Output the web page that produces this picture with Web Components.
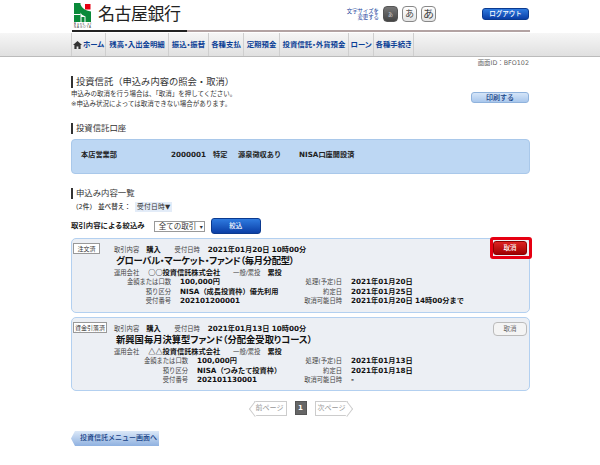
<!DOCTYPE html>
<html lang="ja">
<head>
<meta charset="utf-8">
<title>投資信託</title>
<style>
  html, body { margin: 0; background: #fff; }
  body { font: 7.2px/10px "DejaVu Sans", "Noto Sans CJK JP", sans-serif; color: #222; overflow: hidden; height: 465px; }
  main { display: block; width: 459px; margin: 0 0 0 71px; }
</style>
</head>
<body>
<bank-header></bank-header>
<bank-nav></bank-nav>
<main>
  <page-lead></page-lead>
  <section-title style="margin-top:14px">投資信託口座</section-title>
  <account-box></account-box>
  <order-filter></order-filter>
  <order-card badge="注文済" date="2021年01月20日 10時00分" name="グローバル・マーケット・ファンド（毎月分配型）"
    company="○○投資信託株式会社" amount="100,000円" deposit="NISA（成長投資枠）優先利用" number="202101200001"
    process="2021年01月20日" settle="2021年01月25日" limit="2021年01月20日 14時00分まで"
    label-width="100" height="75" tight active></order-card>
  <order-card badge="資金引落済" date="2021年01月13日 10時00分" name="新興国毎月決算型ファンド（分配金受取りコース）"
    company="△△投資信託株式会社" amount="100,000円" deposit="NISA（つみたて投資枠）" number="202101130001"
    process="2021年01月13日" settle="2021年01月18日" limit="-"
    label-width="117" height="74" style="margin-top:4px"></order-card>
  <page-nav></page-nav>
  <back-link>投資信託メニュー画面へ</back-link>
</main>
<script>
class BankHeader extends HTMLElement {
  constructor () {
    super()
    this.attachShadow({mode: 'open'}).innerHTML = `
      <style>
        :host { display: block; width: 458px; height: 33px; margin-left: 72px; box-sizing: border-box; }
        .top { display: flex; align-items: flex-start; height: 30px; }
        .logo { margin: 2px 6px 0 1px; }
        .name { font: 400 17px/18px "Noto Sans CJK JP", sans-serif; letter-spacing: -.5px; color: #222; margin-top: 4px; }
        .size { display: flex; align-items: center; gap: 4px; margin: 6px 0 0 auto; }
        .size span { font-size: 5.4px; line-height: 6.5px; color: #1a3f9c; text-align: right; }
        .size b { display: flex; align-items: center; justify-content: center; width: 15px; height: 16px; border: 1px solid #888; border-radius: 4px; box-sizing: border-box; background: linear-gradient(#fff, #e4e4e4); color: #444; font-weight: 400; font-size: 9px; line-height: 1; }
        .size b.on { background: linear-gradient(#777, #444); color: #ddd; font-size: 5px; border-color: #555; }
        .size b.lg { font-size: 11px; }
        .out { width: 47px; height: 12px; margin: 8px 1px 0 46px; border-radius: 3px; background: linear-gradient(#2f7be0, #0a3ea6); border: 1px solid #0b3a8f; box-sizing: border-box; color: #fff; font-size: 6.5px; line-height: 10px; text-align: center; font-weight: 500; }
        .rule { height: 2px; width: 458px; background: linear-gradient(90deg, #222 0, #222 115px, #b3a3a3 115px, #b3a3a3 100%); }
      </style>
      <div class="top">
        <svg class="logo" width="19" height="26" viewBox="0 0 19 26">
          <path fill="#0a8a3a" d="M1 1h6.5v1.5C9 6 12 8.5 18 9.5V20h-5.5v-5.6C9.5 13.5 8 12 7.5 10.5V20H1z"/>
          <rect x="1" y="12" width="6.5" height="1" fill="#fff"/>
          <rect x="8.5" y="15" width="3" height="5" fill="#0a8a3a"/>
          <rect x="12" y="2" width="5.5" height="5.5" fill="#e60012"/>
          <text x="1" y="23" font-size="2.9" font-family="Liberation Sans" fill="#333" textLength="17">Bank of</text>
          <text x="1" y="26" font-size="2.9" font-family="Liberation Sans" fill="#333" textLength="17">NAGOYA</text>
        </svg>
        <div class="name">名古屋銀行</div>
        <div class="size">
          <span>文字サイズを<br>変更する</span>
          <b class="on">あ</b><b>あ</b><b class="lg">あ</b>
        </div>
        <div class="out">ログアウト</div>
      </div>
      <div class="rule"></div>`
  }
}

class BankNav extends HTMLElement {
  constructor () {
    super()
    const items = [['ホーム', 34], ['残高・入出金明細', 63], ['振込・振替', 40], ['各種支払', 35], ['定期預金', 36], ['投資信託・外貨預金', 69], ['ローン', 25], ['各種手続き', 41]]
    const links = items.map(([t, w], i) => `<a style="width:${w}px">${i === 0 ? '<svg width="9" height="8" viewBox="0 0 9 8"><path fill="#333" d="M4.5 0 9 4H7.6v4H5.4V5.4H3.6V8H1.4V4H0z"/></svg>' : ''}${t}</a>`).join('')
    this.attachShadow({mode: 'open'}).innerHTML = `
      <style>
        :host { display: block; height: 24px; background: linear-gradient(#f6f6f6, #e0e0e0); border-bottom: 1px solid #bbb; box-sizing: border-box; padding-left: 71px; }
        nav { display: flex; height: 23px; }
        a { display: flex; align-items: center; justify-content: center; gap: 1px; box-sizing: border-box; border-left: 1px solid #cfcfcf; color: #0b3f96; font-weight: 700; font-size: 7.4px; white-space: nowrap; font-feature-settings: "palt"; }
        a:last-child { border-right: 1px solid #cfcfcf; }
      </style>
      <nav>${links}</nav>`
  }
}

class SectionTitle extends HTMLElement {
  constructor () {
    super()
    this.attachShadow({mode: 'open'}).innerHTML = `
      <style>
        :host { display: block; border-left: 2px solid #333; padding-left: 3px; font-size: 8.4px; line-height: 11px; color: #333; }
        :host([large]) { font-size: 9.3px; line-height: 12px; }
      </style>
      <slot></slot>`
  }
}

class SoftButton extends HTMLElement {
  constructor () {
    super()
    this.attachShadow({mode: 'open'}).innerHTML = `
      <style>
        :host { display: flex; align-items: center; justify-content: center; box-sizing: border-box; border-radius: 3px; font-size: 7px; font-weight: 500; border: 1px solid #8fb2dc; background: linear-gradient(#d5e5f8, #a9c7ec); color: #143f86; }
        :host([tone=blue]) { background: linear-gradient(#2f7be0, #0a3ea6); border-color: #0b3a8f; color: #fff; }
        :host([tone=red]) { background: linear-gradient(#dd2222, #a00000); border-color: #8c0000; color: #fff; }
        :host([tone=plain]) { background: #f4f4f4; border-color: #bbb; color: #666; font-weight: 400; border-radius: 4px; }
      </style>
      <slot></slot>`
  }
}

class PageLead extends HTMLElement {
  constructor () {
    super()
    this.attachShadow({mode: 'open'}).innerHTML = `
      <style>
        :host { display: block; }
        .id { text-align: right; font-size: 6.4px; line-height: 10px; color: #666; padding: 1px 1px 0 0; }
        section-title { margin-top: 8px; }
        p { margin: 1px 0 0 0; font-size: 6.5px; line-height: 10px; color: #333; }
        .row { display: flex; align-items: flex-start; justify-content: space-between; padding-right: 1px; }
        soft-button { width: 58px; height: 11px; margin-top: 4px; }
      </style>
      <div class="id">画面ID：BFO102</div>
      <section-title large>投資信託（申込み内容の照会・取消）</section-title>
      <div class="row">
        <p>申込みの取消を行う場合は、「取消」を押してください。<br>※申込み状況によっては取消できない場合があります。</p>
        <soft-button>印刷する</soft-button>
      </div>`
  }
}

class AccountBox extends HTMLElement {
  constructor () {
    super()
    this.attachShadow({mode: 'open'}).innerHTML = `
      <style>
        :host { display: block; height: 35px; margin-top: 5px; box-sizing: border-box; background: #bdd7f3; border: 1px solid #a9c8ea; border-radius: 4px; }
        div { display: flex; box-sizing: border-box; height: 100%; align-items: center; padding: 0 0 3px 9px; font-weight: 700; font-size: 7.2px; color: #222; white-space: nowrap; }
        span:nth-child(1) { width: 90px; }
        span:nth-child(2) { width: 42px; }
        span:nth-child(3) { width: 25px; }
        span:nth-child(4) { width: 61px; }
      </style>
      <div><span>本店営業部</span><span>2000001</span><span>特定</span><span>源泉徴収あり</span><span>NISA口座開設済</span></div>`
  }
}

class OrderFilter extends HTMLElement {
  constructor () {
    super()
    this.attachShadow({mode: 'open'}).innerHTML = `
      <style>
        :host { display: block; margin-top: 14px; }
        .sort { display: flex; align-items: center; margin-top: 3px; padding-left: 1px; font-weight: 500; font-size: 6.6px; color: #333; }
        .sort span:first-child { width: 26px; }
        .sort span:nth-child(2) { width: 37px; }
        .sort i { font-style: normal; font-weight: 400; background: #e3ecf8; padding: 0 2px; font-size: 6.8px; letter-spacing: .2px; color: #333; }
        .by { display: flex; align-items: center; margin-top: 6px; font-weight: 700; font-size: 7.4px; color: #222; }
        .sel { box-sizing: border-box; width: 51px; height: 11px; margin-left: 9px; border: 1px solid #999; font-weight: 400; font-size: 7.5px; line-height: 9px; padding-left: 4px; white-space: nowrap; overflow: hidden; color: #333; display: flex; justify-content: space-between; }
        .sel em { font-style: normal; font-size: 6px; padding-right: 1px; }
        soft-button { width: 50px; height: 16px; margin-left: 6px; font-size: 6.5px; }
      </style>
      <section-title>申込み内容一覧</section-title>
      <div class="sort"><span>（2件）</span><span>並べ替え：</span><i>受付日時▼</i></div>
      <div class="by">取引内容による絞込み<div class="sel">全ての取引<em>▾</em></div><soft-button tone="blue">絞込</soft-button></div>`
  }
}

class OrderCard extends HTMLElement {
  constructor () {
    super()
    this.attachShadow({mode: 'open'})
  }

  connectedCallback () {
    const a = n => this.getAttribute(n) || ''
    const active = this.hasAttribute('active')
    const labelWidth = Number(a('label-width'))
    this.shadowRoot.innerHTML = `
      <style>
        :host { display: block; position: relative; box-sizing: border-box; height: ${a('height')}px; margin-top: 4px; padding: 4px 1px 0; background: #eceff4; border: 1px solid #b3d0f0; border-radius: 5px; font-size: 6.3px; line-height: 10px; color: #444; }
        .wrap { display: grid; grid-template-columns: 41px 1fr; }
        .badge { justify-self: start; box-sizing: border-box; min-width: 27px; height: 11px; padding: 0 1px; border: 1px solid #999; background: #fff; text-align: center; font-size: 6px; line-height: 9px; color: #333; white-space: nowrap; }
        .line { display: flex; align-items: baseline; height: 10px; white-space: nowrap; }
        b { font-weight: 700; font-size: 7.2px; color: #111; }
        .first { padding-top: 2px; }
        .first b:nth-of-type(1) { margin: 0 14px 0 7px; }
        .first b:nth-of-type(2) { margin-left: 8px; }
        .title { margin: 0 0 1px 2px; font-weight: 700; font-size: 9.3px; line-height: 11px; color: #111; white-space: nowrap; font-feature-settings: "palt"; letter-spacing: ${this.hasAttribute('tight') ? -0.3 : 0}px; }
        .co b { margin: 0 13px 0 9px; font-family: "Noto Sans CJK JP", sans-serif; }
        .co b + span + b { margin-left: 7px; }
        .pair { display: grid; grid-template-columns: ${labelWidth}px ${271 - labelWidth - 45}px 45px 1fr; height: 9.7px; align-items: baseline; margin-left: -43px; white-space: nowrap; }
        .pair .v, .pair .w { padding-left: 9px; }
        .pair .l, .pair .r { text-align: right; }
        soft-button { position: absolute; right: 2px; top: ${active ? 2 : 4}px; width: 34px; height: 14px; font-size: 6.5px; }
        .mark { position: absolute; right: -3px; top: -2px; width: 42px; height: 22px; box-sizing: border-box; border: 3px solid #e60012; border-radius: 3px; }
      </style>
      <div class="wrap">
        <div class="badge">${a('badge')}</div>
        <div>
          <div class="line first"><span>取引内容</span><b>購入</b><span>受付日時</span><b>${a('date')}</b></div>
          <div class="title">${a('name')}</div>
          <div class="line co"><span>運用会社</span><b>${a('company')}</b><span>一般/累投</span><b>累投</b></div>
          <div class="pair"><span class="l">金額または口数</span><b class="v">${a('amount')}</b><span class="r">処理(予定)日</span><b class="w">${a('process')}</b></div>
          <div class="pair"><span class="l">預り区分</span><b class="v">${a('deposit')}</b><span class="r">約定日</span><b class="w">${a('settle')}</b></div>
          <div class="pair"><span class="l">受付番号</span><b class="v">${a('number')}</b><span class="r">取消可能日時</span><b class="w">${a('limit')}</b></div>
        </div>
      </div>
      <soft-button tone="${active ? 'red' : 'plain'}">取消</soft-button>
      ${active ? '<div class="mark"></div>' : ''}`
  }
}

class PageNav extends HTMLElement {
  constructor () {
    super()
    this.attachShadow({mode: 'open'}).innerHTML = `
      <style>
        :host { display: flex; justify-content: center; align-items: center; gap: 8px; height: 16px; margin-top: 9px; font-size: 7px; color: #999; }
        span { position: relative; box-sizing: border-box; height: 15px; line-height: 13px; border: 1px solid #ccc; text-align: center; background: #fff; }
        .p { width: 33px; }
        .p::before { content: ""; position: absolute; top: 2px; width: 9px; height: 9px; background: #fff; border: 1px solid #ccc; transform: rotate(45deg) skew(8deg, 8deg); }
        .prev { margin-left: 4px; border-left: 0; }
        .prev::before { left: -4px; border-top: 0; border-right: 0; }
        .next { margin-right: 4px; border-right: 0; }
        .next::before { right: -4px; border-bottom: 0; border-left: 0; }
        .p em { position: relative; font-style: normal; }
        .n { width: 12px; background: #666; color: #fff; font-weight: 700; height: 14px; border-color: #555; }
      </style>
      <span class="p prev"><em>前ページ</em></span><span class="n">1</span><span class="p next"><em>次ページ</em></span>`
  }
}

class BackLink extends HTMLElement {
  constructor () {
    super()
    this.attachShadow({mode: 'open'}).innerHTML = `
      <style>
        :host { display: block; width: 88px; height: 15px; margin-top: 15px; clip-path: polygon(0 50%, 4px 0, 100% 0, 100% 100%, 4px 100%); background: linear-gradient(#dbe8f8, #8fb1e0); box-sizing: border-box; padding-left: 9px; font-size: 7px; line-height: 15px; font-weight: 500; color: #143f86; white-space: nowrap; }
      </style>
      <slot></slot>`
  }
}

customElements.define('bank-header', BankHeader)
customElements.define('bank-nav', BankNav)
customElements.define('section-title', SectionTitle)
customElements.define('soft-button', SoftButton)
customElements.define('page-lead', PageLead)
customElements.define('account-box', AccountBox)
customElements.define('order-filter', OrderFilter)
customElements.define('order-card', OrderCard)
customElements.define('page-nav', PageNav)
customElements.define('back-link', BackLink)
</script>
</body>
</html>
